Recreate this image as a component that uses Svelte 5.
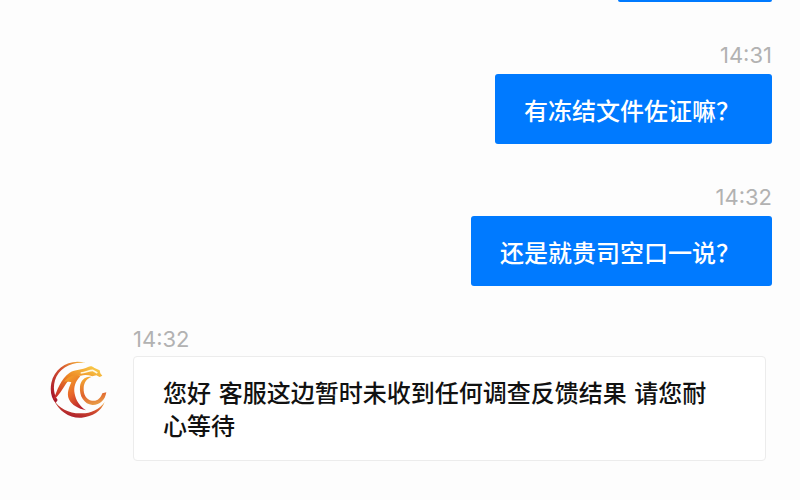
<script lang="ts">
	type Message = {
		time: string;
		text: string;
		mine: boolean;
	};

	const messages: Message[] = [
		{ time: '14:31', text: '有冻结文件佐证嘛？', mine: true },
		{ time: '14:32', text: '还是就贵司空口一说？', mine: true },
		{
			time: '14:32',
			text: '您好 客服这边暂时未收到任何调查反馈结果 请您耐心等待',
			mine: false
		}
	];
</script>

<main class="chat">
	<!-- tail of the message scrolled off the top -->
	<div class="previous"></div>

	{#each messages as message}
		{#if message.mine}
			<div class="message mine">
				<time class="time">{message.time}</time>
				<p class="bubble">{message.text}</p>
			</div>
		{:else}
			<div class="message theirs">
				<svg class="avatar" viewBox="30 32 174 174" aria-hidden="true">
					<defs>
						<linearGradient id="ring" x1="1" y1="0" x2="0.2" y2="1">
							<stop offset="0" stop-color="#f9c23c" />
							<stop offset="0.45" stop-color="#d4502f" />
							<stop offset="1" stop-color="#a5162c" />
						</linearGradient>
						<linearGradient id="flame" x1="0.9" y1="0" x2="0.2" y2="1">
							<stop offset="0" stop-color="#f9cf4a" />
							<stop offset="0.45" stop-color="#ee8a25" />
							<stop offset="1" stop-color="#c92c28" />
						</linearGradient>
						<linearGradient id="body" x1="0.2" y1="0" x2="0.7" y2="1">
							<stop offset="0" stop-color="#f2a128" />
							<stop offset="0.5" stop-color="#e8652a" />
							<stop offset="1" stop-color="#b51d2d" />
						</linearGradient>
						<linearGradient id="claw" x1="0.4" y1="0" x2="0.6" y2="1">
							<stop offset="0" stop-color="#f3a832" />
							<stop offset="0.6" stop-color="#e0622c" />
							<stop offset="1" stop-color="#e9a04a" />
						</linearGradient>
					</defs>
					<path
						fill="url(#ring)"
						d="M137 38C92 24 44 50 34 98C29 124 35 145 47 158L53 149C41 132 39 110 45 90C56 54 94 33 137 38Z"
					/>
					<path
						fill="url(#ring)"
						d="M41 148C56 182 90 205 125 202C157 199 184 183 194 155C177 179 150 190 123 189C88 190 57 174 41 148Z"
					/>
					<path
						fill="url(#flame)"
						d="M40 149C52 119 62 85 89 67C106 56 126 60 144 50C151 46 157 47 162 52L179 60L181 69L187 76L179 80L169 75L157 78C146 74 134 73 122 76C101 78 88 86 78 100C66 118 57 135 40 149Z"
					/>
					<path
						fill="url(#body)"
						d="M72 94C86 76 107 72 121 78C106 93 100 111 104 130C108 151 119 167 138 180C114 175 96 165 87 147C79 128 88 110 94 96C86 93 80 93 72 94Z"
					/>
					<path
						fill="url(#claw)"
						d="M155 80C138 76 122 89 120 108C117 138 133 162 157 164C178 165 195 151 199 126L187 129C181 146 170 154 156 151C139 149 130 133 131 113C132 95 141 84 155 80Z"
					/>
					<path
						fill="none"
						stroke="#fff8e2"
						stroke-width="5"
						d="M122 68C138 68 145 60 158 60L172 68"
					/>
				</svg>
				<div class="content">
					<time class="time">{message.time}</time>
					<p class="card">{message.text}</p>
				</div>
			</div>
		{/if}
	{/each}
</main>

<style>
	:global(body) {
		margin: 0;
		background-color: #fdfdfd;
	}

	.chat {
		display: flex;
		flex-direction: column;
		padding: 0 28px 36px 50px;
		font-family: 'Noto Sans CJK SC', sans-serif;
		font-size: 24px;
		font-weight: 500;
	}

	.previous {
		align-self: flex-end;
		width: 154px;
		height: 2px;
		border-radius: 0 0 3px 3px;
		background-color: #007aff;
	}

	.message {
		display: flex;
		margin-top: 38px;
	}

	.mine {
		flex-direction: column;
		align-items: flex-end;
	}

	.theirs {
		align-items: flex-start;
		gap: 25px;
	}

	.time {
		display: block;
		font-family: Inter, sans-serif;
		font-size: 22px;
		font-weight: 400;
		line-height: 30px;
		color: #b2b2b2;
	}

	.bubble {
		margin: 4px 0 0;
		padding: 19px 32px 17px 29px;
		border-radius: 3px;
		background-color: #007aff;
		color: #fff;
		line-height: 34px;
	}

	.avatar {
		flex: none;
		width: 58px;
		height: 58px;
		margin-top: 37px;
	}

	.content {
		flex: 1;
		margin-right: 6px;
	}

	.card {
		margin: 2px 0 0;
		padding: 21px 36px 16px 29px;
		border: 1px solid #ececec;
		border-radius: 4px;
		background-color: #fff;
		color: #111;
		font-family: 'DejaVu Sans', 'Noto Sans CJK SC', sans-serif;
		line-height: 33px;
	}
</style>
